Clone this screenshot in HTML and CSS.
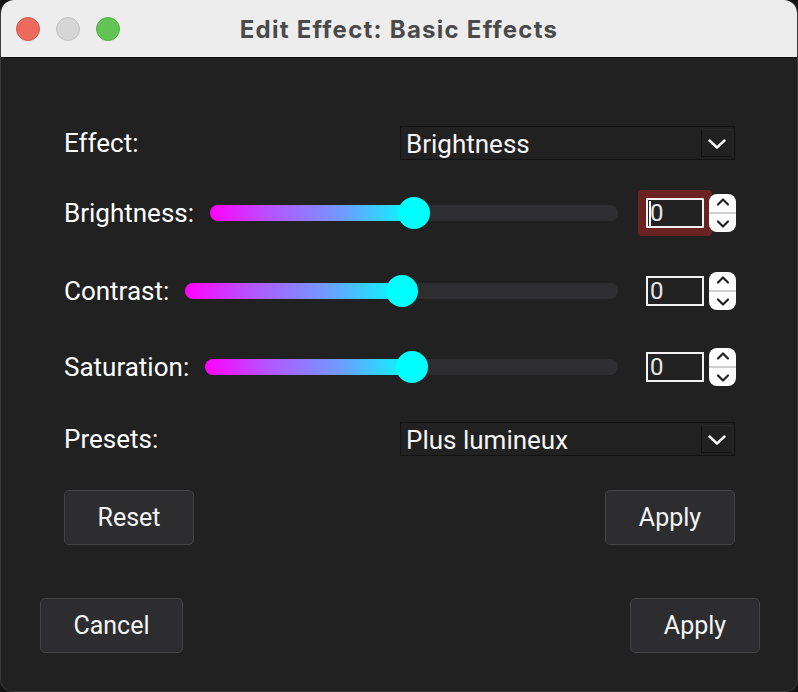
FILE: index.html
```html
<!DOCTYPE html>
<html>
<head>
<meta charset="utf-8">
<link rel="stylesheet" href="styles.css">
</head>
<body>
<div class="window">
  <div class="titlebar">
    <div class="lights">
      <span class="light red"></span>
      <span class="light gray"></span>
      <span class="light green"></span>
    </div>
    <div class="title">Edit Effect: Basic Effects</div>
  </div>
  <div class="content">
    <div class="row row-combo r1">
      <span class="label">Effect:</span>
      <div class="combo">
        <span class="combo-text">Brightness</span>
        <span class="combo-btn"><svg width="18" height="10" viewBox="0 0 18 10"><path d="M1.5 1.5 L9 8.5 L16.5 1.5" fill="none" stroke="#fff" stroke-width="2.4" stroke-linecap="round" stroke-linejoin="round"/></svg></span>
      </div>
    </div>

    <div class="row row-slider r2">
      <span class="label">Brightness:</span>
      <div class="slider"><div class="fill" style="width:50%"></div><div class="handle" style="left:50%"></div></div>
      <div class="spin">
        <div class="spin-box focused"><span class="caret"></span>0</div>
        <div class="spin-btns">
          <svg width="16" height="10" viewBox="0 0 16 10"><path d="M3 7.5 L8 2.5 L13 7.5" fill="none" stroke="#222" stroke-width="2.2" stroke-linecap="round" stroke-linejoin="round"/></svg>
          <span class="spin-div"></span>
          <svg width="16" height="10" viewBox="0 0 16 10"><path d="M3 2.5 L8 7.5 L13 2.5" fill="none" stroke="#222" stroke-width="2.2" stroke-linecap="round" stroke-linejoin="round"/></svg>
        </div>
      </div>
    </div>

    <div class="row row-slider r3">
      <span class="label">Contrast:</span>
      <div class="slider"><div class="fill" style="width:50%"></div><div class="handle" style="left:50%"></div></div>
      <div class="spin">
        <div class="spin-box">0</div>
        <div class="spin-btns">
          <svg width="16" height="10" viewBox="0 0 16 10"><path d="M3 7.5 L8 2.5 L13 7.5" fill="none" stroke="#222" stroke-width="2.2" stroke-linecap="round" stroke-linejoin="round"/></svg>
          <span class="spin-div"></span>
          <svg width="16" height="10" viewBox="0 0 16 10"><path d="M3 2.5 L8 7.5 L13 2.5" fill="none" stroke="#222" stroke-width="2.2" stroke-linecap="round" stroke-linejoin="round"/></svg>
        </div>
      </div>
    </div>

    <div class="row row-slider r4">
      <span class="label">Saturation:</span>
      <div class="slider"><div class="fill" style="width:50%"></div><div class="handle" style="left:50%"></div></div>
      <div class="spin">
        <div class="spin-box">0</div>
        <div class="spin-btns">
          <svg width="16" height="10" viewBox="0 0 16 10"><path d="M3 7.5 L8 2.5 L13 7.5" fill="none" stroke="#222" stroke-width="2.2" stroke-linecap="round" stroke-linejoin="round"/></svg>
          <span class="spin-div"></span>
          <svg width="16" height="10" viewBox="0 0 16 10"><path d="M3 2.5 L8 7.5 L13 2.5" fill="none" stroke="#222" stroke-width="2.2" stroke-linecap="round" stroke-linejoin="round"/></svg>
        </div>
      </div>
    </div>

    <div class="row row-combo r5">
      <span class="label">Presets:</span>
      <div class="combo">
        <span class="combo-text">Plus lumineux</span>
        <span class="combo-btn"><svg width="18" height="10" viewBox="0 0 18 10"><path d="M1.5 1.5 L9 8.5 L16.5 1.5" fill="none" stroke="#fff" stroke-width="2.4" stroke-linecap="round" stroke-linejoin="round"/></svg></span>
      </div>
    </div>

    <div class="row row-buttons r6">
      <button class="btn btn-sm">Reset</button>
      <button class="btn btn-sm">Apply</button>
    </div>
  </div>
  <div class="footer">
    <button class="btn btn-cancel">Cancel</button>
    <button class="btn btn-sm">Apply</button>
  </div>
</div>
</body>
</html>
```
FILE: styles.css
```css
* { box-sizing: border-box; }
html, body {
  margin: 0;
  padding: 0;
  background: #141414;
}
body {
  width: 798px;
  height: 692px;
  overflow: hidden;
  font-family: Roboto, "Liberation Sans", sans-serif;
}
.window {
  width: 798px;
  height: 692px;
  border-radius: 13px;
  background: #212121;
  border: 1px solid #3a3a3a;
  border-top: none;
  overflow: hidden;
  display: flex;
  flex-direction: column;
}
.titlebar {
  height: 58px;
  background: #ecedec;
  border-bottom: 1px solid #0c0c0c;
  display: flex;
  align-items: center;
  position: relative;
  flex-shrink: 0;
  border-radius: 13px 13px 0 0;
}
.lights {
  display: flex;
  gap: 16px;
  padding-left: 15px;
  padding-top: 1px;
}
.light {
  width: 24px;
  height: 24px;
  border-radius: 50%;
  display: block;
}
.light.red { background: #ee6a5f; border: 1px solid #d8574d; }
.light.gray { background: #d6d6d6; border: 1px solid #bfbfbf; }
.light.green { background: #61c454; border: 1px solid #50ad44; }
.title {
  position: absolute;
  left: 0;
  right: 0;
  top: 0;
  bottom: 0;
  display: flex;
  align-items: center;
  justify-content: center;
  font-family: Inter, "Open Sans", sans-serif;
  font-weight: 700;
  font-size: 24px;
  letter-spacing: 1.25px;
  color: #4a4a4a;
  padding-top: 1px;
}
.content {
  display: flex;
  flex-direction: column;
  padding: 0 61px 0 63px;
}
.row {
  display: flex;
  align-items: center;
}
.label {
  color: #ffffff;
  font-size: 26px;
  white-space: nowrap;
}
.row-combo { height: 34px; justify-content: space-between; }
.r1 { margin-top: 68px; }
.r2 { margin-top: 31px; height: 44px; }
.r3 { margin-top: 34px; height: 44px; }
.r4 { margin-top: 32px; height: 44px; }
.r5 { margin-top: 33px; }
.r6 { margin-top: 34px; justify-content: space-between; padding-right: 1px; }

.combo {
  width: 335px;
  height: 34px;
  margin-right: 1px;
  border: 1px solid #121212;
  display: flex;
  align-items: center;
  justify-content: space-between;
  padding: 0 1px 0 5px;
}
.combo-text {
  color: #f4f4f4;
  font-size: 26px;
  line-height: 32px;
  padding-top: 1px;
}
.combo-btn {
  width: 32px;
  height: 28px;
  border: 1px solid #111111;
  border-top-color: #2a2a2a;
  border-right-color: #2a2a2a;
  display: flex;
  align-items: center;
  justify-content: center;
  padding-top: 2px;
}

.slider {
  flex: 1;
  height: 16px;
  margin-left: 16px;
  margin-right: 28px;
  background: #2e2e30;
  border-radius: 8px;
  position: relative;
}
.fill {
  height: 16px;
  border-radius: 8px;
  background: linear-gradient(to right, #ff00ff 0%, #b455ff 30%, #6f9bff 65%, #00ffff 100%);
}
.handle {
  position: absolute;
  top: 50%;
  width: 32px;
  height: 32px;
  margin-left: -16px;
  margin-top: -16px;
  border-radius: 50%;
  background: #00ffff;
}

.spin {
  display: flex;
  align-items: center;
  gap: 5px;
  position: relative;
}
.spin-box {
  width: 58px;
  height: 30px;
  border: 2px solid #f2f2f2;
  background: #222222;
  color: #e8e8e8;
  font-size: 24px;
  line-height: 26px;
  padding-left: 2px;
  position: relative;
}
.spin-box.focused {
  box-shadow: 0 0 0 8px #6a2222;
  border-radius: 1px;
}
.caret {
  position: absolute;
  left: 1px;
  top: 1px;
  width: 2px;
  height: 25px;
  background: #ffffff;
}
.spin-btns {
  width: 27px;
  height: 38px;
  background: #ffffff;
  border-radius: 8px;
  display: flex;
  flex-direction: column;
  align-items: center;
  justify-content: space-between;
  padding: 3px 0;
  position: relative;
  z-index: 1;
}
.spin-div {
  width: 100%;
  height: 2px;
  background: #d0d0d0;
}

.btn {
  background: #2d2d2f;
  border: 1.5px solid #444446;
  border-radius: 5px;
  color: #f4f4f4;
  font-family: Roboto, "Liberation Sans", sans-serif;
  font-size: 25px;
  height: 55px;
  padding: 0;
}
.btn-sm { width: 130px; }
.btn-cancel { width: 143px; }
.footer {
  display: flex;
  justify-content: space-between;
  padding: 0 37px 0 39px;
  margin-top: 53px;
}
```
